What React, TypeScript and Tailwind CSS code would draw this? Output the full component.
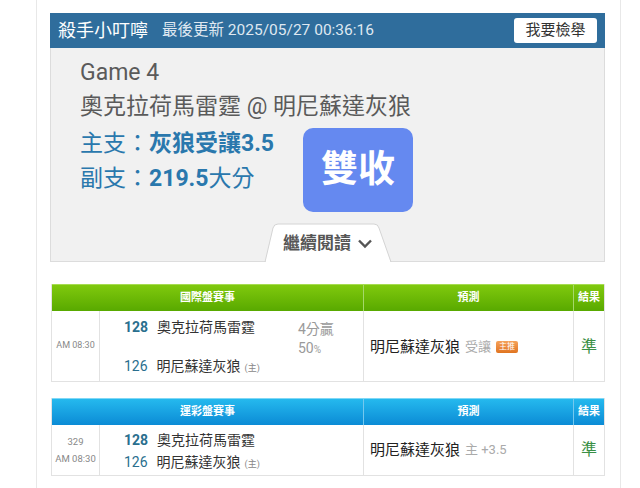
import React from "react";

const FONT = "font-['Roboto','Noto_Sans_CJK_TC',sans-serif]";

function Badge() {
  return (
    <span className="ml-[5px] inline-flex h-[12px] w-[22px] items-center justify-center rounded-[2px] bg-gradient-to-b from-[#f5a25a] to-[#e0741e] text-[8px] leading-none text-white">
      主推
    </span>
  );
}

function Zhu() {
  return <span className="ml-[4px] text-[9px] text-[#888]">(主)</span>;
}

export default function App() {
  return (
    <div className={`w-[640px] h-[488px] overflow-hidden bg-white ${FONT}`}>
      <div className="ml-[36px] h-[488px] w-[585px] border-x border-[#e8e8e8] pl-[13px] pr-[15px] pt-[13px]">
        {/* header */}
        <div className="flex h-[35px] items-center bg-[#2f6d9c] pl-[8px] pr-[8px]">
          <span className="text-[18px] text-white">殺手小叮嚀</span>
          <span className="ml-[14px] text-[15.5px] text-[#dfe8f1]">最後更新 2025/05/27 00:36:16</span>
          <span className="ml-auto flex h-[25px] w-[83px] items-center justify-center rounded-[3px] bg-white text-[15px] text-[#333]">
            我要檢舉
          </span>
        </div>
        {/* grey card */}
        <div className="relative h-[214px] border border-t-0 border-[#dcdcdc] bg-[#f1f1f1] pl-[29px] pt-[11px]">
          <div className="text-[23px] leading-[28px] text-[#5a5a5a]">Game 4</div>
          <div className="h-[39px] text-[23px] leading-[39px] text-[#5a5a5a]">奧克拉荷馬雷霆 @ 明尼蘇達灰狼</div>
          <div className="flex items-start">
            <div className="w-[223px] text-[23px] leading-[35px] text-[#2a78ad]">
              <div>
                主支：<span className="font-bold">灰狼受讓3.5</span>
              </div>
              <div>
                副支：<span className="font-bold">219.5</span><span>大分</span>
              </div>
            </div>
            <div className="mt-[2px] flex h-[84px] w-[110px] items-center justify-center rounded-[10px] bg-[#6589f0] text-[37px] font-bold text-white">
              雙收
            </div>
          </div>
          {/* tab */}
          <div className="absolute bottom-[-1px] left-[213px] h-[39px] w-[128px]">
            <svg className="absolute inset-0" width="128" height="39" viewBox="0 0 128 39">
              <path d="M1 39 L9 5 Q10 1 14 1 L110 1 Q114 1 115 5 L127 39 Z" fill="#ffffff" stroke="#d4d4d4" strokeWidth="1" />
              <rect x="2" y="38" width="124" height="1" fill="#ffffff" />
            </svg>
            <div className="relative flex h-full items-center pl-[19px] pt-[2px]">
              <span className="text-[17px] font-bold text-[#555]">繼續閱讀</span>
              <svg className="ml-[6px]" width="16" height="11" viewBox="0 0 16 11">
                <path d="M2 2.5 L8 8.5 L14 2.5" fill="none" stroke="#555" strokeWidth="2.4" />
              </svg>
            </div>
          </div>
        </div>

        {/* table 1 */}
        <div className="ml-px mt-[22px] border border-t-0 border-[#e2e2e2]">
          <div className="grid h-[27px] grid-cols-[311px_210px_1fr] border-t border-[#a6dc50] bg-gradient-to-b from-[#80c90e] to-[#58a900] text-[11px] font-bold text-white">
            <div className="flex items-center justify-center">國際盤賽事</div>
            <div className="flex items-center justify-center border-l border-[#a5d86a]">預測</div>
            <div className="flex items-center justify-center border-l border-[#a5d86a]">結果</div>
          </div>
          <div className="grid h-[70px] grid-cols-[47px_264px_210px_1fr]">
            <div className="flex items-center justify-center text-[9px] text-[#888]">AM 08:30</div>
            <div className="flex border-l border-[#e2e2e2] pl-[24px]">
              <div className="flex w-[174px] flex-col justify-between pb-[3px] pt-[6px] text-[14px] leading-[20px] text-[#333]">
                <div>
                  <span className="font-bold text-[#2a6f8e]">128</span>
                  <span className="ml-[9px]">奧克拉荷馬雷霆</span>
                </div>
                <div>
                  <span className="text-[#2a6f8e]">126</span>
                  <span className="ml-[9px]">明尼蘇達灰狼</span>
                  <Zhu />
                </div>
              </div>
              <div className="pt-[9px] text-[14px] leading-[19px] text-[#9a9a9a]">
                <div>4分贏</div>
                <div>
                  50<span className="text-[10px]">%</span>
                </div>
              </div>
            </div>
            <div className="flex items-center border-l border-[#e2e2e2] pl-[6px] pt-[2px]">
              <span className="text-[15px] text-[#222]">明尼蘇達灰狼</span>
              <span className="ml-[5px] text-[13px] text-[#aaa]">受讓</span>
              <Badge />
            </div>
            <div className="flex items-center justify-center border-l border-[#e2e2e2] pt-[2px] text-[16px] text-[#3a8f45]">準</div>
          </div>
        </div>

        {/* table 2 */}
        <div className="ml-px mt-[16px] border border-t-0 border-[#e2e2e2]">
          <div className="grid h-[27px] grid-cols-[311px_210px_1fr] border-t border-[#7fd8f6] bg-gradient-to-b from-[#25b9ee] to-[#0b8bd5] text-[11px] font-bold text-white">
            <div className="flex items-center justify-center">運彩盤賽事</div>
            <div className="flex items-center justify-center border-l border-[#74c8ee]">預測</div>
            <div className="flex items-center justify-center border-l border-[#74c8ee]">結果</div>
          </div>
          <div className="grid h-[50px] grid-cols-[47px_264px_210px_1fr]">
            <div className="flex flex-col items-center justify-center text-[9.5px] leading-[17px] text-[#888]">
              <div>329</div>
              <div>AM 08:30</div>
            </div>
            <div className="flex flex-col gap-[2px] border-l border-[#e2e2e2] pl-[24px] pt-[5px] text-[14px] leading-[20px] text-[#333]">
              <div>
                <span className="font-bold text-[#2a6f8e]">128</span>
                <span className="ml-[9px]">奧克拉荷馬雷霆</span>
              </div>
              <div>
                <span className="text-[#2a6f8e]">126</span>
                <span className="ml-[9px]">明尼蘇達灰狼</span>
                <Zhu />
              </div>
            </div>
            <div className="flex items-center border-l border-[#e2e2e2] pl-[6px]">
              <span className="text-[15px] text-[#222]">明尼蘇達灰狼</span>
              <span className="ml-[5px] text-[13px] text-[#aaa]">主 +3.5</span>
            </div>
            <div className="flex items-center justify-center border-l border-[#e2e2e2] text-[16px] text-[#3a8f45]">準</div>
          </div>
        </div>
      </div>
    </div>
  );
}
